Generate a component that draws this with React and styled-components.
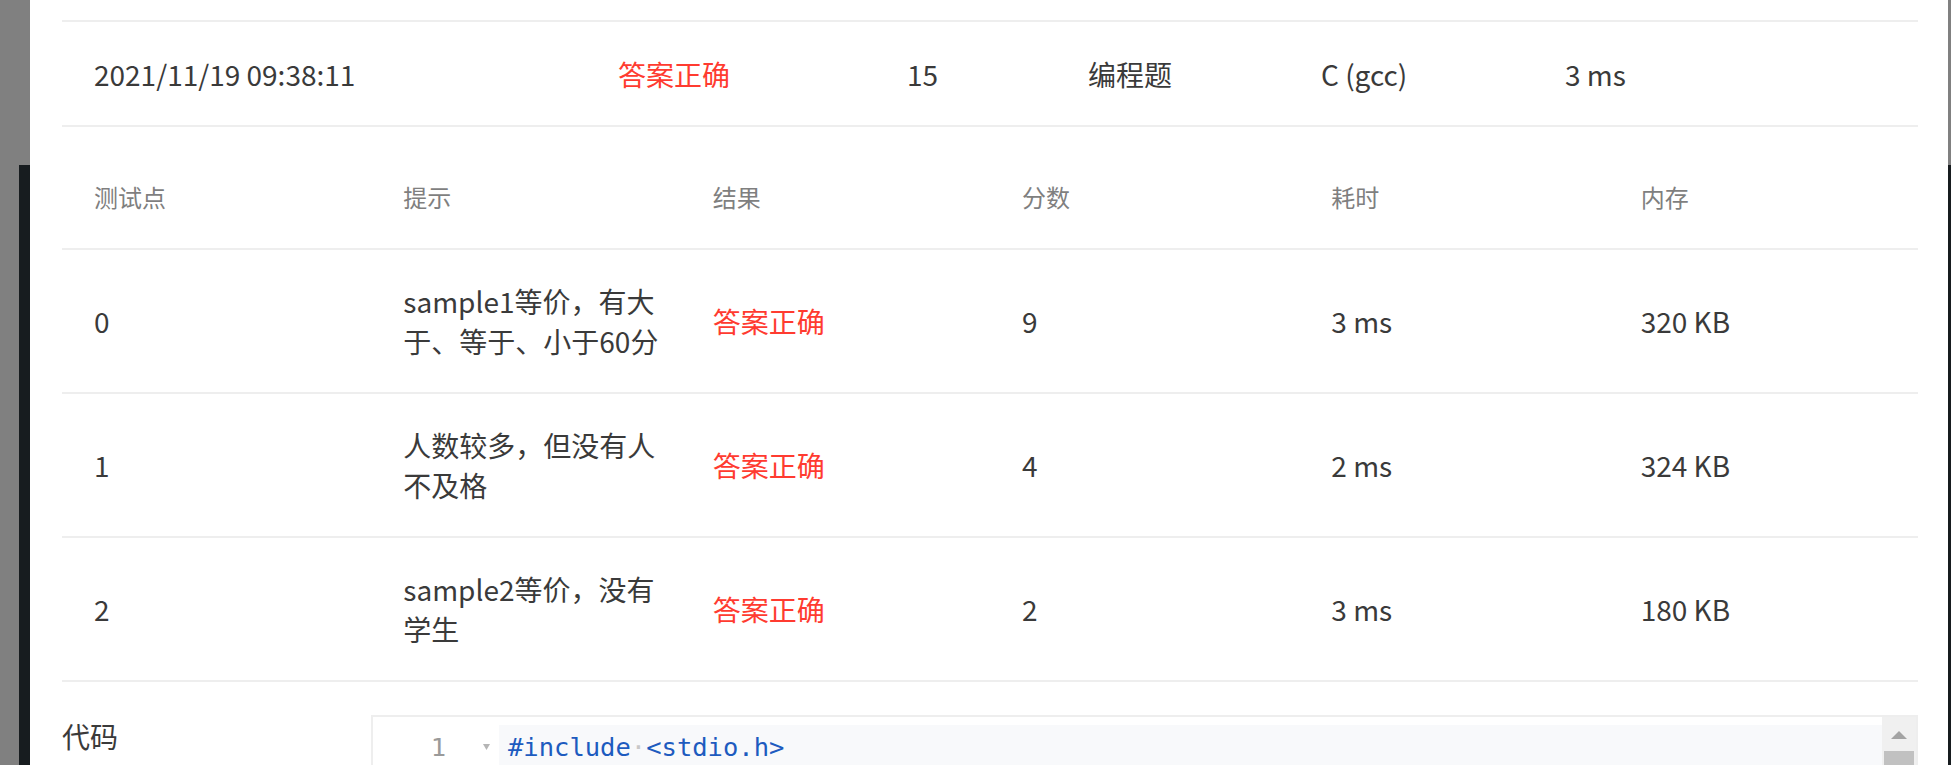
import React from "react";
import styled, { createGlobalStyle } from "styled-components";

const GlobalStyle = createGlobalStyle`
  html, body {
    margin: 0;
    padding: 0;
    background: #808080;
    overflow: hidden;
  }
  * {
    box-sizing: border-box;
  }
`;

const summary = {
  time: "2021/11/19 09:38:11",
  status: "答案正确",
  score: "15",
  type: "编程题",
  lang: "C (gcc)",
  cost: "3 ms",
};

const cases = [
  { id: "0", hint: "sample1等价，有大于、等于、小于60分", score: "9", time: "3 ms", mem: "320 KB" },
  { id: "1", hint: "人数较多，但没有人不及格", score: "4", time: "2 ms", mem: "324 KB" },
  { id: "2", hint: "sample2等价，没有学生", score: "2", time: "3 ms", mem: "180 KB" },
];

export default function App() {
  return (
    <>
      <GlobalStyle />
      <Screen>
        <Backdrop $width={30} $inset={19} />
        <Modal>
          <CutRow />
          <SummaryRow>
            <Cell>{summary.time}</Cell>
            <Cell $red>{summary.status}</Cell>
            <Cell>{summary.score}</Cell>
            <Cell>{summary.type}</Cell>
            <Cell>{summary.lang}</Cell>
            <Cell>{summary.cost}</Cell>
          </SummaryRow>

          <CaseTable>
            <CaseRow>
              <HeadCell>测试点</HeadCell>
              <HeadCell>提示</HeadCell>
              <HeadCell>结果</HeadCell>
              <HeadCell>分数</HeadCell>
              <HeadCell>耗时</HeadCell>
              <HeadCell>内存</HeadCell>
            </CaseRow>
            {cases.map((c) => (
              <CaseRow key={c.id}>
                <Cell>{c.id}</Cell>
                <Cell>{c.hint}</Cell>
                <Cell $red>答案正确</Cell>
                <Cell>{c.score}</Cell>
                <Cell>{c.time}</Cell>
                <Cell>{c.mem}</Cell>
              </CaseRow>
            ))}
          </CaseTable>

          <CodeSection>
            <CodeLabel>代码</CodeLabel>
            <Editor>
              <Gutter>
                <LineNo>1</LineNo>
                <FoldMark viewBox="0 0 7 6">
                  <path d="M0 0 L7 0 L3.5 6 Z" fill="#b5b5b5" />
                </FoldMark>
              </Gutter>
              <CodeArea>
                <CodeLine>
                  #include<Invisible>·</Invisible>&lt;stdio.h&gt;
                </CodeLine>
              </CodeArea>
              <ScrollTrack>
                <ScrollArrow viewBox="0 0 16 8">
                  <path d="M8 0 L16 8 L0 8 Z" fill="#a3a3a3" />
                </ScrollArrow>
                <ScrollThumb />
              </ScrollTrack>
            </Editor>
          </CodeSection>
        </Modal>
        <Backdrop $width={3} $inset={0} />
      </Screen>
    </>
  );
}

const Screen = styled.div`
  display: flex;
  height: 765px;
  overflow: hidden;
  font-family: "Noto Sans CJK SC", "Noto Sans", sans-serif;
`;

const Backdrop = styled.div`
  flex: 0 0 ${(p) => p.$width}px;
  display: flex;
  flex-direction: column;
  background: #808080;

  &::after {
    content: "";
    margin-top: 165px;
    margin-left: ${(p) => p.$inset}px;
    flex: 1;
    background: #171c1f;
  }
`;

const Modal = styled.div`
  flex: 1;
  background: #ffffff;
  padding: 0 30px 0 32px;
  overflow: hidden;
`;

const CutRow = styled.div`
  height: 22px;
  border-bottom: 2px solid #eeeeee;
`;

const Cell = styled.div`
  padding: 31px 14px 31px 32px;
  font-size: 28px;
  line-height: 40px;
  color: ${(p) => (p.$red ? "#ff3b30" : "#3a3a3a")};
  min-width: 0;
`;

const SummaryRow = styled.div`
  display: grid;
  grid-template-columns: 524px 289px 181px 233px 244px 1fr;
  border-bottom: 2px solid #eeeeee;

  & > ${Cell} {
    padding-top: 32px;
  }
`;

const HeadCell = styled(Cell)`
  font-size: 24px;
  color: #7f7f7f;
`;

const CaseTable = styled.div`
  margin-top: 19px;
`;

const CaseRow = styled.div`
  display: grid;
  grid-template-columns: repeat(6, 1fr);
  align-items: center;
  border-bottom: 2px solid #eeeeee;
`;

const CodeSection = styled.div`
  display: grid;
  grid-template-columns: 309px 1fr;
  margin-top: 33px;
`;

const CodeLabel = styled.div`
  font-size: 28px;
  line-height: 40px;
  padding-top: 1px;
  color: #3a3a3a;
`;

const Editor = styled.div`
  display: flex;
  height: 200px;
  border: 2px solid #eeeeee;
  background: #ffffff;
`;

const Gutter = styled.div`
  flex: 0 0 126px;
  display: flex;
  align-items: flex-start;
  padding-top: 8px;
`;

const LineNo = styled.div`
  width: 73px;
  text-align: right;
  font-family: "DejaVu Sans Mono", monospace;
  font-size: 25.5px;
  line-height: 44px;
  color: #9a9a9a;
`;

const FoldMark = styled.svg`
  width: 7px;
  height: 6px;
  margin: 19px 0 0 37px;
`;

const CodeArea = styled.div`
  flex: 1;
  padding-top: 8px;
`;

const CodeLine = styled.div`
  height: 44px;
  padding-left: 9px;
  background: #f8f9fb;
  font-family: "DejaVu Sans Mono", monospace;
  font-size: 25.5px;
  line-height: 44px;
  color: #1d5bbf;
  white-space: pre;
`;

const Invisible = styled.span`
  color: #c8c8c8;
`;

const ScrollTrack = styled.div`
  flex: 0 0 34px;
  display: flex;
  flex-direction: column;
  align-items: center;
  background: #f0f0f0;
`;

const ScrollArrow = styled.svg`
  width: 16px;
  height: 8px;
  margin-top: 14px;
`;

const ScrollThumb = styled.div`
  width: 30px;
  height: 120px;
  margin-top: 12px;
  background: #c1c1c1;
`;
